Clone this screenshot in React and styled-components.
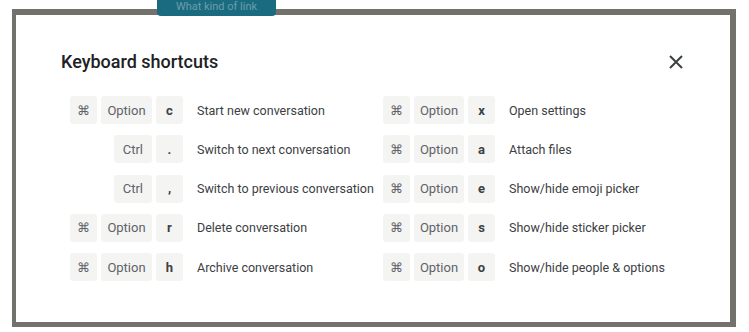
import React from 'react';
import styled, { createGlobalStyle } from 'styled-components';

const GlobalStyle = createGlobalStyle`
  html, body {
    margin: 0;
    padding: 0;
    background: #ffffff;
  }
  body {
    font-family: Roboto, "Liberation Sans", Arial, sans-serif;
    -webkit-font-smoothing: antialiased;
  }
`;

const Page = styled.div`
  position: relative;
  width: 749px;
  height: 332px;
  padding: 9px 13px 5px 12px;
  box-sizing: border-box;
  overflow: hidden;
`;

const BehindChip = styled.div`
  position: absolute;
  left: 157px;
  top: 0;
  width: 119px;
  height: 16px;
  border-radius: 0 0 4px 4px;
  background: #1b6b80;
  color: rgba(255, 255, 255, 0.35);
  font-size: 11px;
  line-height: 14px;
  text-align: center;
`;

const Overlay = styled.div`
  position: relative;
  height: 318px;
  background: #72716b;
  padding: 6px 6px 5px 4px;
  box-sizing: border-box;
`;

const Dialog = styled.div`
  height: 100%;
  background: #ffffff;
  box-sizing: border-box;
  padding: 36px 0 0 45px;
`;

const Header = styled.div`
  display: flex;
  align-items: center;
  justify-content: space-between;
  width: 627px;
  height: 22px;
`;

const Title = styled.h2`
  margin: 0;
  font-size: 18px;
  font-weight: 500;
  color: #202124;
  line-height: 22px;
`;

const CloseButton = styled.button`
  display: flex;
  align-items: center;
  justify-content: center;
  width: 24px;
  height: 24px;
  padding: 0;
  border: none;
  background: none;
  color: #3c4043;
  cursor: pointer;
`;

const Grid = styled.div`
  display: grid;
  grid-template-columns: 113px 172px 112px 1fr;
  grid-auto-rows: 28px;
  column-gap: 14px;
  row-gap: 11.25px;
  margin: 23px 0 0 9px;
`;

const Keys = styled.div`
  display: flex;
  justify-content: flex-end;
  gap: 4px;
`;

const Key = styled.span`
  display: flex;
  align-items: center;
  justify-content: center;
  min-width: 27px;
  padding: 0 ${p => (p.word ? '9px' : '0')};
  height: 28px;
  border-radius: 3px;
  background: #f4f4f3;
  color: ${p => (p.bold ? '#3c4043' : '#5f6368')};
  font-size: 13px;
  font-weight: ${p => (p.bold ? 700 : 400)};
  box-sizing: border-box;
`;

const Desc = styled.span`
  display: flex;
  align-items: center;
  font-size: 12.5px;
  color: #3c4043;
  white-space: nowrap;
`;

const rows = [
  [['⌘', 'Option', 'c'], 'Start new conversation', ['⌘', 'Option', 'x'], 'Open settings'],
  [['Ctrl', '.'], 'Switch to next conversation', ['⌘', 'Option', 'a'], 'Attach files'],
  [['Ctrl', ','], 'Switch to previous conversation', ['⌘', 'Option', 'e'], 'Show/hide emoji picker'],
  [['⌘', 'Option', 'r'], 'Delete conversation', ['⌘', 'Option', 's'], 'Show/hide sticker picker'],
  [['⌘', 'Option', 'h'], 'Archive conversation', ['⌘', 'Option', 'o'], 'Show/hide people & options'],
];

const KeyGroup = ({ keys }) => (
  <Keys>
    {keys.map((k, i) => {
      const last = i === keys.length - 1;
      return (
        <Key key={i} word={k.length > 1} bold={last && k.length === 1}>
          {k}
        </Key>
      );
    })}
  </Keys>
);

export default function App() {
  return (
    <>
      <GlobalStyle />
      <Page>
        <Overlay>
          <Dialog>
            <Header>
              <Title>Keyboard shortcuts</Title>
              <CloseButton aria-label="Close">
                <svg width="14" height="14" viewBox="0 0 14 14">
                  <path d="M1 1 L13 13 M13 1 L1 13" stroke="currentColor" strokeWidth="2" />
                </svg>
              </CloseButton>
            </Header>
            <Grid>
              {rows.map((r, i) => (
                <React.Fragment key={i}>
                  <KeyGroup keys={r[0]} />
                  <Desc>{r[1]}</Desc>
                  <KeyGroup keys={r[2]} />
                  <Desc>{r[3]}</Desc>
                </React.Fragment>
              ))}
            </Grid>
          </Dialog>
        </Overlay>
        <BehindChip>What kind of link</BehindChip>
      </Page>
    </>
  );
}
